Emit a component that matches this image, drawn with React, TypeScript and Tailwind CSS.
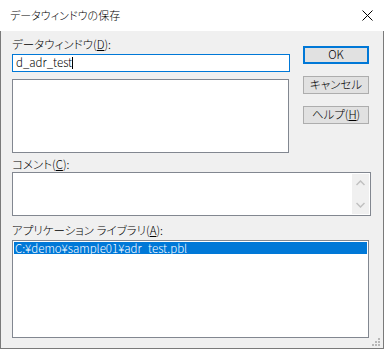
import React from 'react';

const font = "font-['Noto_Sans_CJK_JP','Noto_Sans',sans-serif] [font-feature-settings:'palt'] font-light";

function Btn({ children, primary }: { children: React.ReactNode; primary?: boolean }) {
  return (
    <div
      className={`h-[18px] w-[66px] flex items-center justify-center bg-[#e1e1e1] text-[11.5px] leading-none text-black ${
        primary ? 'border-2 border-[#0078d7]' : 'border border-[#adadad]'
      }`}
    >
      {children}
    </div>
  );
}

export default function App() {
  return (
    <div className={`w-[384px] h-[349px] flex flex-col bg-white text-black text-[11.5px] ${font}`}>
      {/* Title bar */}
      <div className="h-[31px] shrink-0 flex items-center justify-between pl-[10px] pr-[11px] bg-white">
        <span className="text-[11px] leading-none">データウィンドウの保存</span>
        <svg width="11" height="11" viewBox="0 0 11 11">
          <path d="M0.5 0.5L10.5 10.5M10.5 0.5L0.5 10.5" stroke="#000" strokeWidth="1" />
        </svg>
      </div>

      {/* Body */}
      <div className="flex-1 relative flex flex-col bg-[#f0f0f0] border-x border-b border-[#7a7a7a] pl-[11px] pt-[5px]">
        <div className="flex">
          <div className="w-[278px] flex flex-col">
            <div className="h-[17px] leading-[17px]">
              データウィンドウ(<span className="underline">D</span>):
            </div>
            <div className="mt-px h-[18px] bg-white border border-[#0078d7] flex items-center pl-[3px] leading-none">
              d_adr_test<span className="inline-block w-px h-[12px] bg-black" />
            </div>
            <div className="mt-[7px] h-[74px] w-[277px] bg-white border border-[#828790]" />
          </div>
          <div className="ml-[13px] mt-[10px] flex flex-col gap-[12px]">
            <Btn primary>OK</Btn>
            <Btn>キャンセル</Btn>
            <Btn>
              ヘルプ(<span className="underline">H</span>)
            </Btn>
          </div>
        </div>

        <div className="mt-[3px] h-4 leading-4">
          コメント(<span className="underline">C</span>):
        </div>
        <div className="h-[44px] w-[359px] bg-white border border-[#828790] flex justify-end p-px">
          <div className="w-[17px] bg-[#f0f0f0] flex flex-col justify-between items-center py-[6px]">
            <svg width="9" height="6" viewBox="0 0 9 6">
              <path d="M0.5 5L4.5 1L8.5 5" stroke="#c0c0c0" strokeWidth="1.5" fill="none" />
            </svg>
            <svg width="9" height="6" viewBox="0 0 9 6">
              <path d="M0.5 1L4.5 5L8.5 1" stroke="#c0c0c0" strokeWidth="1.5" fill="none" />
            </svg>
          </div>
        </div>

        <div className="mt-[6px] h-4 leading-4">
          アプリケーション ライブラリ(<span className="underline">A</span>):
        </div>
        <div className="mt-[2px] h-[98px] w-[357px] bg-white border border-[#828790] p-px">
          <div className="h-[12px] bg-[#0078d7] text-white leading-[12px] pl-px">
            C:¥demo¥sample01¥adr_test.pbl
          </div>
        </div>

        {/* size grip */}
        <svg width="10" height="10" viewBox="0 0 10 10" className="absolute right-[2px] bottom-[1px]">
          <rect x="7" y="1" width="2" height="2" fill="#b8b8b8" />
          <rect x="4" y="4" width="2" height="2" fill="#b8b8b8" />
          <rect x="7" y="4" width="2" height="2" fill="#b8b8b8" />
          <rect x="1" y="7" width="2" height="2" fill="#b8b8b8" />
          <rect x="4" y="7" width="2" height="2" fill="#b8b8b8" />
          <rect x="7" y="7" width="2" height="2" fill="#b8b8b8" />
        </svg>
      </div>
    </div>
  );
}
